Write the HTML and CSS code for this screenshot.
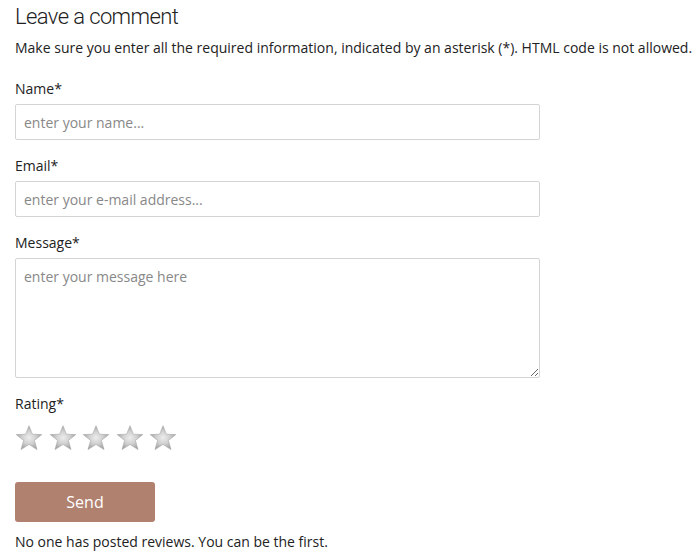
FILE: index.html
```html
<!DOCTYPE html>
<html>
<head>
<meta charset="utf-8">
<link rel="stylesheet" href="styles.css">
</head>
<body>
<div class="page">
  <h2 class="title">Leave a comment</h2>
  <p class="intro">Make sure you enter all the required information, indicated by an asterisk (*). HTML code is not allowed.</p>
  <form class="form">
    <div class="field">
      <label class="label">Name*</label>
      <input class="input" type="text" placeholder="enter your name...">
    </div>
    <div class="field">
      <label class="label">Email*</label>
      <input class="input" type="text" placeholder="enter your e-mail address...">
    </div>
    <div class="field">
      <label class="label">Message*</label>
      <textarea class="textarea" placeholder="enter your message here"></textarea>
    </div>
    <div class="field">
      <label class="label">Rating*</label>
      <div class="stars">
        <svg class="star" viewBox="0 0 28 26"><use href="#star"/></svg>
        <svg class="star" viewBox="0 0 28 26"><use href="#star"/></svg>
        <svg class="star" viewBox="0 0 28 26"><use href="#star"/></svg>
        <svg class="star" viewBox="0 0 28 26"><use href="#star"/></svg>
        <svg class="star" viewBox="0 0 28 26"><use href="#star"/></svg>
      </div>
    </div>
    <button class="send" type="button">Send</button>
  </form>
  <p class="note">No one has posted reviews. You can be the first.</p>
</div>
<svg width="0" height="0" style="position:absolute">
  <defs>
    <radialGradient id="sg" cx="50%" cy="50%" r="55%">
      <stop offset="0" stop-color="#ececec"/>
      <stop offset="0.5" stop-color="#cfcfcf"/>
      <stop offset="1" stop-color="#979797"/>
    </radialGradient>
    <g id="star">
      <path d="M14 0.8 L17.4 9.2 L26.8 9.6 L19.4 15.4 L22 24.6 L14 19.4 L6 24.6 L8.6 15.4 L1.2 9.6 L10.6 9.2 Z" fill="url(#sg)" stroke="#a8a8a8" stroke-width="0.6" stroke-linejoin="round"/>
    </g>
  </defs>
</svg>
</body>
</html>
```
FILE: styles.css
```css
html, body {
  margin: 0;
  padding: 0;
  background: #fff;
}
body {
  font-family: "Open Sans", "Liberation Sans", sans-serif;
  font-size: 14px;
  color: #222;
}
.page {
  padding: 4px 0 0 15px;
}
.title {
  font-family: Roboto, "Liberation Sans", sans-serif;
  font-weight: 300;
  font-size: 22px;
  letter-spacing: -0.6px;
  line-height: 26px;
  margin: 0 0 8px 0;
  color: #222;
}
.intro {
  margin: 0 0 21px 0;
  line-height: 20px;
  white-space: nowrap;
}
.form {
  display: flex;
  flex-direction: column;
}
.field {
  display: flex;
  flex-direction: column;
  margin-bottom: 16px;
}
.label {
  line-height: 20px;
  margin-bottom: 5px;
}
.input, .textarea {
  box-sizing: border-box;
  width: 525px;
  border: 1px solid #d4d4d4;
  border-radius: 2px;
  font-family: "Open Sans", "Liberation Sans", sans-serif;
  font-size: 14px;
  color: #333;
  padding: 0 8px;
  outline: none;
  background: #fff;
}
.input {
  height: 36px;
}
.textarea {
  height: 120px;
  padding: 8px 8px;
  resize: vertical;
}
.input::placeholder, .textarea::placeholder {
  color: #888;
}
.stars {
  display: flex;
  gap: 5.5px;
  margin-top: 6px;
}
.star {
  width: 28px;
  height: 26px;
  display: block;
}
.send {
  width: 140px;
  height: 40px;
  border: none;
  border-radius: 3px;
  background: #b18170;
  color: #fff;
  font-family: "Open Sans", "Liberation Sans", sans-serif;
  font-size: 16px;
  margin-top: 15px;
  padding: 0;
}
.note {
  margin: 10px 0 0 0;
  line-height: 20px;
}
```
